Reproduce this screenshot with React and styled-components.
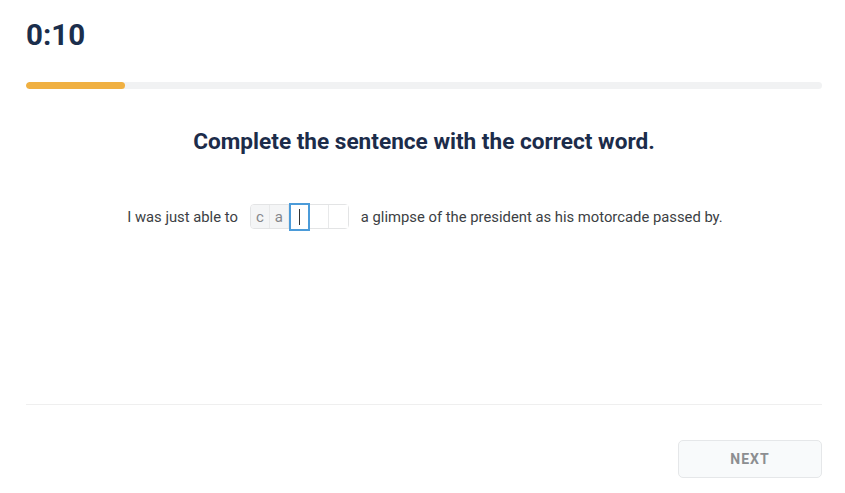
import styled, { createGlobalStyle } from "styled-components";

const GlobalStyle = createGlobalStyle`
    body {
        margin: 0;
        background: #ffffff;
        font-family: 'Roboto', 'Liberation Sans', sans-serif;
    }
`

const letters = ["c", "a", "", "", ""];
const activeIndex = 2;

export default function App() {
    const progress = 12.4;

    return (
        <>
            <GlobalStyle />
            <Page>
                <Timer>0:10</Timer>
                <Track>
                    <Fill style={{ width: `${progress}%` }} />
                </Track>
                <Question>Complete the sentence with the correct word.</Question>
                <Sentence>
                    <span>I was just able to</span>
                    <Word>
                        {letters.map((l, i) => (
                            <Letter key={i} active={i === activeIndex} filled={l !== ""}>
                                {i === activeIndex ? <Caret /> : l}
                            </Letter>
                        ))}
                    </Word>
                    <span>a glimpse of the president as his motorcade passed by.</span>
                </Sentence>
                <Spacer />
                <Divider />
                <Footer>
                    <NextButton disabled>NEXT</NextButton>
                </Footer>
            </Page>
        </>
    );
}

const Page = styled.main`
    width: 796px;
    height: 493px;
    margin-left: 26px;
    display: flex;
    flex-direction: column;
    box-sizing: border-box;
    padding-top: 17px;
`
const Timer = styled.h1`
    margin: 0;
    font-size: 29.5px;
    font-weight: 700;
    color: #1b2e4c;
    line-height: 36px;
`
const Track = styled.div`
    margin-top: 29px;
    height: 7px;
    border-radius: 4px;
    background-color: #f1f2f3;
    overflow: hidden;
`
const Fill = styled.div`
    height: 100%;
    border-radius: 4px;
    background-color: #f0b041;
`
const Question = styled.h2`
    margin: 40px 0 0 0;
    text-align: center;
    font-size: 22.6px;
    font-weight: 700;
    color: #1c2c4a;
    line-height: 26px;
`
const Sentence = styled.div`
    margin-top: 49px;
    display: flex;
    justify-content: center;
    align-items: center;
    gap: 12px;
    font-size: 14.8px;
    color: #3c3f44;
    padding-left: 2px;
`
const Word = styled.div`
    display: flex;
    align-items: center;
    border: 1px solid #e3e4e5;
    border-radius: 4px;
    height: 23px;
`
const Letter = styled.div`
    width: ${props => props.active ? "21px" : "19px"};
    height: ${props => props.active ? "28px" : "23px"};
    box-sizing: border-box;
    display: flex;
    justify-content: center;
    align-items: center;
    font-family: 'Roboto', sans-serif;
    font-size: 15px;
    color: #85878b;
    background-color: ${props => props.filled ? "#f4f5f6" : "#ffffff"};
    border: ${props => props.active ? "2px solid #4b9bd9" : "none"};
    border-right: ${props => props.active ? "2px solid #4b9bd9" : "1px solid #e8e9ea"};
    &:last-child {
        border-right: none;
    }
    &:first-child {
        border-radius: 3px 0 0 3px;
    }
`
const Caret = styled.div`
    width: 1px;
    height: 16px;
    background-color: #333;
`
const Spacer = styled.div`
    flex: 1;
`
const Divider = styled.div`
    height: 1px;
    background-color: #efefef;
`
const Footer = styled.div`
    display: flex;
    justify-content: flex-end;
    padding: 35px 0 15px 0;
`
const NextButton = styled.button`
    width: 144px;
    height: 38px;
    border: 1px solid #e5e7e9;
    border-radius: 5px;
    background-color: #f8fafb;
    color: #8c8e91;
    font-family: 'Roboto', sans-serif;
    font-weight: 700;
    font-size: 14px;
    letter-spacing: 1px;
`
